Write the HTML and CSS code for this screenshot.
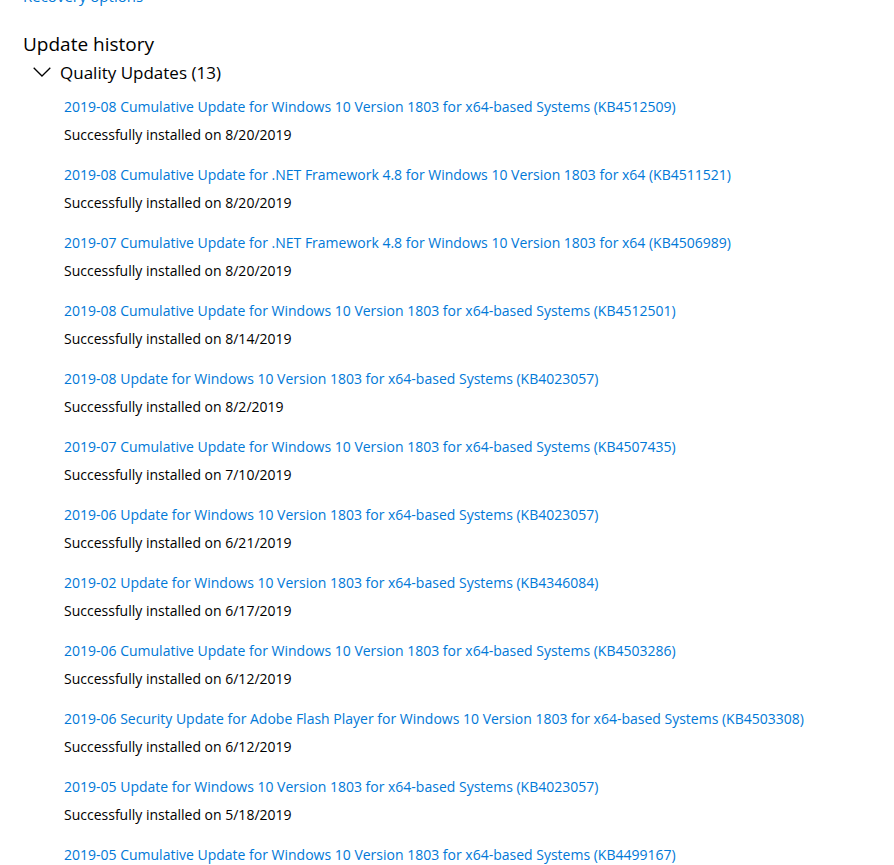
FILE: index.html
```html
<!DOCTYPE html>
<html>
<head>
<meta charset="utf-8">
<link rel="stylesheet" href="styles.css">
</head>
<body>
<div class="page">
  <a class="top-link">Recovery options</a>
  <h1 class="title">Update history</h1>
  <div class="group-head">
    <svg class="chev" width="18" height="10" viewBox="0 0 18 10"><path d="M0.7 0.7 L9 9 L17.3 0.7" fill="none" stroke="#000" stroke-width="1.3"/></svg>
    <span>Quality Updates (13)</span>
  </div>
  <ul class="list">
    <li><a class="upd">2019-08 Cumulative Update for Windows 10 Version 1803 for x64-based Systems (KB4512509)</a><div class="status">Successfully installed on 8/20/2019</div></li>
    <li><a class="upd">2019-08 Cumulative Update for .NET Framework 4.8 for Windows 10 Version 1803 for x64 (KB4511521)</a><div class="status">Successfully installed on 8/20/2019</div></li>
    <li><a class="upd">2019-07 Cumulative Update for .NET Framework 4.8 for Windows 10 Version 1803 for x64 (KB4506989)</a><div class="status">Successfully installed on 8/20/2019</div></li>
    <li><a class="upd">2019-08 Cumulative Update for Windows 10 Version 1803 for x64-based Systems (KB4512501)</a><div class="status">Successfully installed on 8/14/2019</div></li>
    <li><a class="upd">2019-08 Update for Windows 10 Version 1803 for x64-based Systems (KB4023057)</a><div class="status">Successfully installed on 8/2/2019</div></li>
    <li><a class="upd">2019-07 Cumulative Update for Windows 10 Version 1803 for x64-based Systems (KB4507435)</a><div class="status">Successfully installed on 7/10/2019</div></li>
    <li><a class="upd">2019-06 Update for Windows 10 Version 1803 for x64-based Systems (KB4023057)</a><div class="status">Successfully installed on 6/21/2019</div></li>
    <li><a class="upd">2019-02 Update for Windows 10 Version 1803 for x64-based Systems (KB4346084)</a><div class="status">Successfully installed on 6/17/2019</div></li>
    <li><a class="upd">2019-06 Cumulative Update for Windows 10 Version 1803 for x64-based Systems (KB4503286)</a><div class="status">Successfully installed on 6/12/2019</div></li>
    <li><a class="upd">2019-06 Security Update for Adobe Flash Player for Windows 10 Version 1803 for x64-based Systems (KB4503308)</a><div class="status">Successfully installed on 6/12/2019</div></li>
    <li><a class="upd">2019-05 Update for Windows 10 Version 1803 for x64-based Systems (KB4023057)</a><div class="status">Successfully installed on 5/18/2019</div></li>
    <li><a class="upd">2019-05 Cumulative Update for Windows 10 Version 1803 for x64-based Systems (KB4499167)</a><div class="status">Successfully installed on 5/14/2019</div></li>
  </ul>
</div>
</body>
</html>
```
FILE: styles.css
```css
html, body {
  margin: 0;
  padding: 0;
  background: #ffffff;
  overflow: hidden;
}
body {
  font-family: "Open Sans", "Noto Sans", "Liberation Sans", sans-serif;
  color: #000000;
}
.page {
  padding-left: 23px;
  height: 865px;
  overflow: hidden;
}
.top-link {
  display: block;
  color: #0078d7;
  font-size: 15px;
  line-height: 28px;
  height: 28px;
  margin-top: -18px;
}
.title {
  margin: 20px 0 0 0;
  font-size: 19px;
  font-weight: 400;
  line-height: 28px;
}
.group-head {
  display: flex;
  align-items: center;
  height: 26px;
  margin-top: 1px;
  font-size: 17px;
}
.chev {
  margin-left: 10px;
  margin-right: 9px;
}
.list {
  list-style: none;
  margin: 8px 0 0 0;
  padding: 0 0 0 41px;
}
.list li {
  margin-bottom: 12px;
}
.upd {
  display: block;
  color: #0078d7;
  font-size: 14px;
  line-height: 28px;
  white-space: nowrap;
}
.status {
  font-size: 14px;
  line-height: 28px;
}
```
